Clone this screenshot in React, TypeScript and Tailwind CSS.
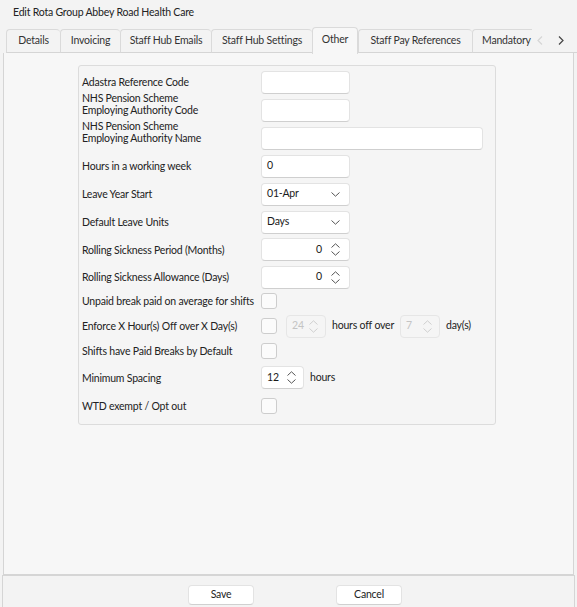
import React from "react";

const font = { fontFamily: 'Lato, "Noto Sans", sans-serif' };
const T = "text-[10.5px] tracking-[-0.2px]";

function Chevron({ dir }: { dir: "up" | "down" }) {
  return (
    <svg width="9" height="5" viewBox="0 0 9 5" className="block">
      {dir === "up" ? (
        <path d="M0.5 4.5 L4.5 0.8 L8.5 4.5" fill="none" stroke="currentColor" strokeWidth="1" />
      ) : (
        <path d="M0.5 0.5 L4.5 4.2 L8.5 0.5" fill="none" stroke="currentColor" strokeWidth="1" />
      )}
    </svg>
  );
}

function SideChevron({ dir, color }: { dir: "left" | "right"; color: string }) {
  return (
    <svg width="6" height="9" viewBox="0 0 6 9" className="block">
      {dir === "left" ? (
        <path d="M5 0.5 L1 4.5 L5 8.5" fill="none" stroke={color} strokeWidth="1.2" />
      ) : (
        <path d="M1 0.5 L5 4.5 L1 8.5" fill="none" stroke={color} strokeWidth="1.2" />
      )}
    </svg>
  );
}

function TextBox({ w, value }: { w: string; value?: string }) {
  return (
    <div
      className={`${w} h-[23px] bg-white border border-[#e3e3e3] border-b-[#cfcfcf] rounded-[4px] flex items-center pl-[5px] ${T} text-[#1a1a1a]`}
    >
      {value}
    </div>
  );
}

function Select({ value }: { value: string }) {
  return (
    <div className={`w-[89px] h-[23px] bg-white border border-[#e3e3e3] border-b-[#cfcfcf] rounded-[4px] flex items-center justify-between pl-[5px] pr-[9px] ${T} text-[#1a1a1a]`}>
      <span>{value}</span>
      <span className="text-[#555]">
        <Chevron dir="down" />
      </span>
    </div>
  );
}

function Spinner({
  w,
  value,
  disabled,
  align = "right",
}: {
  w: string;
  value: string;
  disabled?: boolean;
  align?: "right" | "left";
}) {
  return (
    <div
      className={`${w} h-[23px] border rounded-[4px] flex items-center ${T} ${
        disabled
          ? "bg-[#f5f5f5] border-[#e6e6e6] text-[#c4c4c4]"
          : "bg-white border-[#e3e3e3] border-b-[#cfcfcf] text-[#1a1a1a]"
      }`}
    >
      <span className={`flex-1 ${align === "right" ? "text-right pr-[9px]" : "text-left pl-[5px]"}`}>{value}</span>
      <span className={`flex flex-col gap-[3px] ${align === "right" ? "mr-[9px]" : "mr-[7px]"} ${disabled ? "text-[#cfcfcf]" : "text-[#555]"}`}>
        <Chevron dir="up" />
        <Chevron dir="down" />
      </span>
    </div>
  );
}

function Check() {
  return <div className="w-[16px] h-[16px] bg-[#fbfbfb] border border-[#cdcdcd] rounded-[3px]" />;
}

function Row({
  h,
  label,
  children,
  two,
}: {
  h: string;
  label: React.ReactNode;
  children?: React.ReactNode;
  two?: boolean;
}) {
  return (
    <div className={`${h} flex items-center`}>
      <div className={`w-[179px] shrink-0 ${T} leading-[12px] text-[#222] whitespace-nowrap ${two ? "-mt-[13px]" : ""}`}>{label}</div>
      <div className="flex items-center">{children}</div>
    </div>
  );
}

export default function App() {
  const tabs = ["Details", "Invoicing", "Staff Hub Emails", "Staff Hub Settings", "Other", "Staff Pay References", "Mandatory"];
  const widths = ["w-[54px]", "w-[60px]", "w-[91px]", "w-[101px]", "w-[46px]", "w-[114px]", "w-[60px]"];
  return (
    <div style={font} className="w-[577px] h-[607px] bg-[#f3f3f3] flex flex-col overflow-hidden text-[#222]">
      <div className={`h-[26px] pl-[13px] pt-[5px] ${T} text-[#222]`}>Edit Rota Group Abbey Road Health Care</div>
      {/* tabs */}
      <div className="h-[27px] flex items-end pl-[6px] relative">
        {tabs.map((t, i) => {
          const sel = t === "Other";
          const last = i === tabs.length - 1;
          return (
            <div
              key={t}
              className={`${widths[i]} shrink-0 flex items-center ${T} text-[#333] border-t border-l border-[#dadada] rounded-t-[4px] ${
                sel
                  ? "h-[27px] bg-[#f7f7f7] border-r justify-center relative z-10 -mb-px pb-[2px]"
                  : last
                  ? "h-[24px] bg-[#f3f3f3] pl-[9px] border-b border-b-[#d5d5d5] overflow-hidden whitespace-nowrap rounded-tr-none"
                  : "h-[24px] bg-[#f3f3f3] justify-center border-b border-b-[#d5d5d5]"
              }`}
            >
              {t}
            </div>
          );
        })}
        <div className="flex-1 h-[24px] flex items-center border-b border-[#d5d5d5] pl-[5px] gap-[15px]">
          <SideChevron dir="left" color="#d6d6d6" />
          <SideChevron dir="right" color="#444" />
        </div>
      </div>
      {/* panel */}
      <div className="h-[522px] mx-[3px] border-x border-b border-[#d5d5d5] bg-[#f7f7f7] pt-[12px] pl-[74px]">
        <div className="w-[418px] h-[360px] border border-[#dcdcdc] rounded-[3px] bg-[#f5f5f5] pt-[2px] pl-[3px] flex flex-col">
          <Row h="h-[28px]" label="Adastra Reference Code">
            <TextBox w="w-[89px]" />
          </Row>
          <Row h="h-[28px]" two label={<>NHS Pension Scheme<br />Employing Authority Code</>}>
            <TextBox w="w-[89px]" />
          </Row>
          <Row h="h-[28px]" two label={<>NHS Pension Scheme<br />Employing Authority Name</>}>
            <TextBox w="w-[222px]" />
          </Row>
          <Row h="h-[28px]" label="Hours in a working week">
            <TextBox w="w-[89px]" value="0" />
          </Row>
          <Row h="h-[28px]" label="Leave Year Start">
            <Select value="01-Apr" />
          </Row>
          <Row h="h-[28px]" label="Default Leave Units">
            <Select value="Days" />
          </Row>
          <Row h="h-[27px]" label="Rolling Sickness Period (Months)">
            <Spinner w="w-[89px]" value="0" />
          </Row>
          <Row h="h-[28px]" label="Rolling Sickness Allowance (Days)">
            <Spinner w="w-[89px]" value="0" />
          </Row>
          <Row h="h-[20px]" label="Unpaid break paid on average for shifts">
            <Check />
          </Row>
          <Row h="h-[30px]" label="Enforce X Hour(s) Off over X Day(s)">
            <Check />
            <div className="ml-[9px]">
              <Spinner w="w-[40px]" value="24" disabled align="left" />
            </div>
            <span className={`ml-[6px] ${T} text-[#222]`}>hours off over</span>
            <div className="ml-[6px]">
              <Spinner w="w-[40px]" value="7" disabled align="left" />
            </div>
            <span className={`ml-[6px] ${T} text-[#222]`}>day(s)</span>
          </Row>
          <Row h="h-[20px]" label="Shifts have Paid Breaks by Default">
            <Check />
          </Row>
          <Row h="h-[33px]" label="Minimum Spacing">
            <Spinner w="w-[43px]" value="12" align="left" />
            <span className={`ml-[6px] ${T} text-[#222]`}>hours</span>
          </Row>
          <Row h="h-[23px]" label="WTD exempt / Opt out">
            <Check />
          </Row>
        </div>
      </div>
      {/* footer */}
      <div className="flex-1 mx-[2px] border-x border-t border-[#d5d5d5] bg-[#f3f3f3] relative">
        <div className="absolute left-[185px] top-[9px] flex gap-[82px]">
          <div className={`w-[66px] h-[20px] bg-white border border-[#e3e3e3] border-b-[#d0d0d0] rounded-[4px] flex items-center justify-center ${T} text-[#222]`}>
            Save
          </div>
          <div className={`w-[66px] h-[20px] bg-white border border-[#e3e3e3] border-b-[#d0d0d0] rounded-[4px] flex items-center justify-center ${T} text-[#222]`}>
            Cancel
          </div>
        </div>
      </div>
    </div>
  );
}
